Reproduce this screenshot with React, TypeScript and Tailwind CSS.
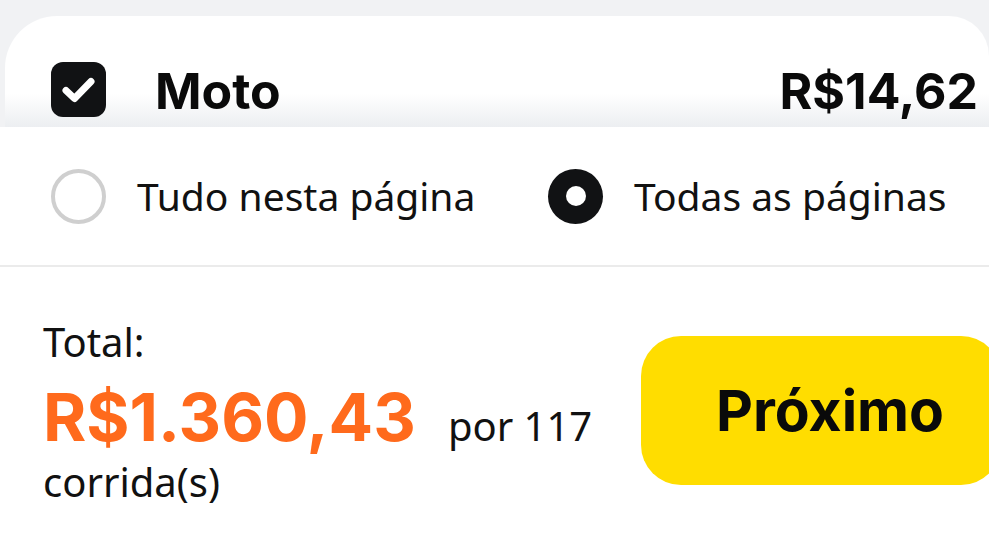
function CheckIcon() {
  return (
    <svg viewBox="0 0 55 55" className="w-[55px] h-[55px]" fill="none">
      <path d="M15 28.5l8.5 8L40 19.5" stroke="white" strokeWidth="7" strokeLinecap="round" strokeLinejoin="round" />
    </svg>
  );
}

function Radio({ checked, label }: { checked: boolean; label: string }) {
  return (
    <div className="flex items-center">
      {checked ? (
        <div className="w-[55px] h-[55px] rounded-full bg-[#111214] flex items-center justify-center">
          <div className="w-[20px] h-[20px] rounded-full bg-white" />
        </div>
      ) : (
        <div className="w-[55px] h-[55px] rounded-full border-[4px] border-[#cfcfcf] bg-white" />
      )}
      <span className="ml-[31px] text-[39px] text-[#111]">{label}</span>
    </div>
  );
}

export default function App() {
  return (
    <div
      className="w-[989px] h-[556px] bg-[#f1f2f4] overflow-hidden flex flex-col"
      style={{ fontFamily: '"Noto Sans", sans-serif' }}
    >
      <div className="pt-[16px] pl-[5px]">
        <div className="h-[111px] rounded-tl-[52px] rounded-tr-[40px] bg-gradient-to-b from-white from-70% to-[#eceef1] flex items-start pt-[46px] pl-[46px] pr-[11px]">
          <div className="w-[55px] h-[55px] rounded-[12px] bg-[#111214]">
            <CheckIcon />
          </div>
          <span className="ml-[49px] text-[50px] font-bold leading-[58px] text-[#0a0a0a]" style={{ fontFamily: 'Inter, sans-serif' }}>
            Moto
          </span>
          <span className="ml-auto text-[50px] font-bold leading-[58px] text-[#0a0a0a]" style={{ fontFamily: 'Inter, sans-serif' }}>
            R$14,62
          </span>
        </div>
      </div>

      <div className="flex-1 bg-white flex flex-col">
        <div className="h-[140px] flex items-center pl-[51px] border-b-2 border-[#ebebeb]">
          <div className="w-[497px]">
            <Radio checked={false} label="Tudo nesta página" />
          </div>
          <Radio checked={true} label="Todas as páginas" />
        </div>

        <div className="flex items-start pl-[43px] pt-[49px]">
          <div className="w-[580px] text-[40px] text-[#111] leading-[52px]">
            <div className="mb-[10px]">Total:</div>
            <div>
              <span className="text-[66px] font-bold text-[#ff6a1c] leading-[78px] mr-[32px]" style={{ fontFamily: 'Inter, sans-serif' }}>
                R$1.360,43
              </span>
              por 117 corrida(s)
            </div>
          </div>
          <button
            className="ml-auto mt-[20px] w-[360px] h-[149px] -mr-[12px] rounded-[40px] bg-[#ffdd00] text-[57px] font-bold text-[#0a0a0a] flex items-center pl-[75px]"
            style={{ fontFamily: 'Inter, sans-serif' }}
          >
            Próximo
          </button>
        </div>
      </div>
    </div>
  );
}
